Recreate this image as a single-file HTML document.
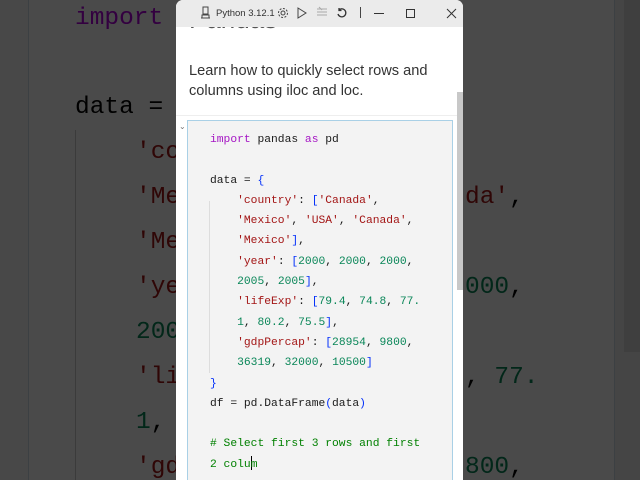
<!DOCTYPE html>
<html style="width:640px;height:480px;overflow:hidden"><head><meta charset="utf-8"><style>
*{margin:0;padding:0;box-sizing:border-box}
body{width:640px;height:480px;overflow:hidden;background:#fff;position:relative;font-family:"Liberation Sans",sans-serif}
.bgl{position:absolute;left:0;top:0;width:29px;height:480px;background:#f6f6f6;border-right:1px solid #d0dce6}
.bgr{position:absolute;left:614px;top:0;width:26px;height:480px;background:#eee;border-left:1px solid #d0dce6}
.thumb{position:absolute;left:624px;top:0;width:16px;height:352px;background:#d8d8d8}
.big{position:absolute;left:75px;font-family:"Liberation Mono",monospace;font-size:24.5px;white-space:pre;color:#000;line-height:45px}
.bs{color:#a31515}.bn{color:#098658}.bk{color:#af00db}
.guide{position:absolute;left:75px;top:130px;width:1px;height:350px;background:#ccc}
.dim{position:absolute;left:0;top:0;width:640px;height:480px;background:rgba(0,0,0,0.71)}
.win{position:absolute;left:176px;top:0;width:287px;height:480px;background:#fff;border-radius:7px 7px 0 0;overflow:hidden}
.tb{position:absolute;left:0;top:0;width:287px;height:27px;background:#ebebeb;z-index:2}
.tb span{position:absolute;top:8px;font-size:9.5px;color:#333}
.tb svg{position:absolute;top:6px}
.head{position:absolute;left:13px;top:4px;font-size:26px;color:#555}
.desc{position:absolute;left:13px;top:61px;font-size:14.6px;line-height:20px;color:#333}
.sep{position:absolute;left:0;top:115px;width:287px;height:1px;background:#eee}
.cell{position:absolute;left:11px;top:120px;width:266px;height:370px;background:#f3f3f3;border:1px solid #a9d0e6}
.code{position:absolute;left:22px;top:9px;font-family:"Liberation Mono",monospace;font-size:11.3px;line-height:20.3px;white-space:pre;color:#1a1a1a}
.k{color:#a515c4}.s{color:#a31515}.n{color:#098658}.c{color:#008000}.b{color:#0431fa}
.sb{position:absolute;left:281px;top:92px;width:6px;height:198px;background:#c8c8c8}
.chev{position:absolute;left:3px;top:122px;font-size:8px;color:#777}
.cgd{position:absolute;left:21px;top:80px;width:1px;height:172px;background:#ddd}
.cur{display:inline-block;width:1px;height:14px;background:#000;vertical-align:-3px;margin:0 -1px 0 0}
</style></head><body>
<div class="bgl"></div><div class="bgr"></div><div class="thumb"></div>
<div class="guide"></div>
<div class="big" style="top:-4px"><span class="bk">import</span></div>
<div class="big" style="top:85px">data =</div>
<div class="big" style="top:130px;left:136px"><span class="bs">'co</span>
<span class="bs">'Me</span>
<span class="bs">'Me</span>
<span class="bs">'ye</span>
<span class="bn">200</span>
<span class="bs">'li</span>
<span class="bn">1</span>,
<span class="bs">'gd</span></div>
<div class="big" style="top:175px;left:465px"><span class="bs">da'</span>,</div>
<div class="big" style="top:265px;left:465px"><span class="bn">000</span>,</div>
<div class="big" style="top:355px;left:465px">, <span class="bn">77.</span></div>
<div class="big" style="top:445px;left:465px"><span class="bn">800</span>,</div>
<div class="dim"></div>
<div class="win">
<div class="tb">
<svg style="left:24px" width="11" height="13" viewBox="0 0 11 13" fill="none" stroke="#444" stroke-width="1"><rect x="3" y="1" width="5" height="7"/><path d="M1 12h9M2 12V9h7v3"/></svg>
<span style="left:40px">Python 3.12.1</span>
<svg style="left:101px;top:7px" width="12" height="12" viewBox="0 0 12 12" fill="none" stroke="#444" stroke-width="1"><circle cx="6" cy="6" r="2"/><circle cx="6" cy="6" r="4.5" stroke-dasharray="2 1.5"/></svg>
<svg style="left:120px;top:7px" width="12" height="12" viewBox="0 0 12 12" fill="none" stroke="#444" stroke-width="1"><path d="M2 1l8 5-8 5z"/></svg>
<svg style="left:140px;top:6px" width="12" height="12" viewBox="0 0 12 12" fill="none" stroke="#aaa" stroke-width="1"><path d="M1 3h10M1 6h10M1 9h10M3 1l3 3"/></svg>
<svg style="left:160px;top:7px" width="12" height="12" viewBox="0 0 12 12" fill="none" stroke="#333" stroke-width="1.3"><path d="M3 3a4 4 0 1 1-1 4M3 1v2.5h2.5"/></svg>
<svg style="left:184px;top:7px" width="2" height="12"><rect width="1" height="11" fill="#444"/></svg>
<svg style="left:197px;top:7px" width="12" height="12"><rect x="1" y="6" width="10" height="1" fill="#333"/></svg>
<svg style="left:229px;top:8px" width="11" height="11" fill="none" stroke="#333"><rect x="1.5" y="1.5" width="8" height="8"/></svg>
<svg style="left:270px;top:8px" width="11" height="11" stroke="#333"><path d="M1 1l9 9M10 1l-9 9"/></svg>
</div>
<div class="head">Pandas</div>
<div class="desc">Learn how to quickly select rows and<br>columns using iloc and loc.</div>
<div class="sep"></div>
<div class="chev">⌄</div>
<div class="cell"><div class="cgd"></div><div class="code"><span class="k">import</span> pandas <span class="k">as</span> pd

data = <span class="b">{</span>
    <span class="s">'country'</span>: <span class="b">[</span><span class="s">'Canada'</span>,
    <span class="s">'Mexico'</span>, <span class="s">'USA'</span>, <span class="s">'Canada'</span>,
    <span class="s">'Mexico'</span><span class="b">]</span>,
    <span class="s">'year'</span>: <span class="b">[</span><span class="n">2000</span>, <span class="n">2000</span>, <span class="n">2000</span>,
    <span class="n">2005</span>, <span class="n">2005</span><span class="b">]</span>,
    <span class="s">'lifeExp'</span>: <span class="b">[</span><span class="n">79.4</span>, <span class="n">74.8</span>, <span class="n">77.</span>
    <span class="n">1</span>, <span class="n">80.2</span>, <span class="n">75.5</span><span class="b">]</span>,
    <span class="s">'gdpPercap'</span>: <span class="b">[</span><span class="n">28954</span>, <span class="n">9800</span>,
    <span class="n">36319</span>, <span class="n">32000</span>, <span class="n">10500</span><span class="b">]</span>
<span class="b">}</span>
df = pd.DataFrame<span class="b">(</span>data<span class="b">)</span>

<span class="c"># Select first 3 rows and first</span>
<span class="c">2 colu<span class="cur"></span>m</span></div></div>
<div class="sb"></div>
</div>
</body></html>
